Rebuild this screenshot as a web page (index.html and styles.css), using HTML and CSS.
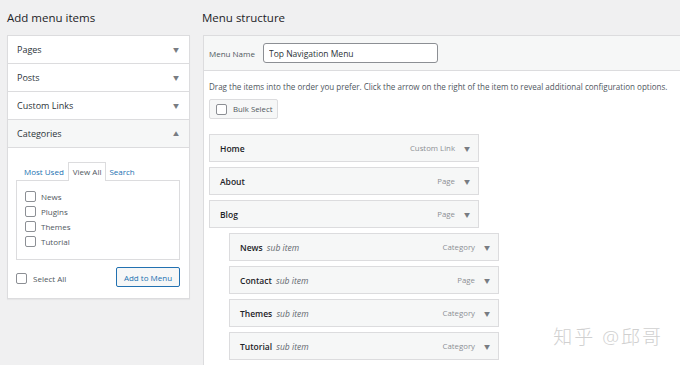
FILE: index.html
```html
<!DOCTYPE html>
<html lang="en">
<head>
    <meta charset="UTF-8">
    <title>Menus</title>
    <link rel="stylesheet" href="styles.css">
</head>
<body>
    <div class="menus-page">
        <div class="col-left">
            <h2 class="col-title">Add menu items</h2>
            <div class="accordion">
                <div class="acc-row"><span>Pages</span><span class="arrow">&#9660;</span></div>
                <div class="acc-row"><span>Posts</span><span class="arrow">&#9660;</span></div>
                <div class="acc-row"><span>Custom Links</span><span class="arrow">&#9660;</span></div>
                <div class="acc-row acc-open"><span>Categories</span><span class="arrow">&#9650;</span></div>
                <div class="acc-body">
                    <div class="tabs">
                        <span class="tab">Most Used</span>
                        <span class="tab tab-active">View All</span>
                        <span class="tab">Search</span>
                    </div>
                    <div class="cat-list">
                        <label class="cat-item"><span class="check"></span>News</label>
                        <label class="cat-item"><span class="check"></span>Plugins</label>
                        <label class="cat-item"><span class="check"></span>Themes</label>
                        <label class="cat-item"><span class="check"></span>Tutorial</label>
                    </div>
                    <div class="acc-actions">
                        <label class="select-all"><span class="check"></span>Select All</label>
                        <button type="button" class="add-btn">Add to Menu</button>
                    </div>
                </div>
            </div>
        </div>

        <div class="col-right">
            <h2 class="col-title">Menu structure</h2>
            <div class="menu-panel">
                <div class="menu-header">
                    <span class="menu-name-label">Menu Name</span>
                    <input class="menu-name" type="text" value="Top Navigation Menu">
                </div>
                <div class="menu-body">
                    <p class="hint">Drag the items into the order you prefer. Click the arrow on the right of the item to reveal additional configuration options.</p>
                    <button type="button" class="bulk-btn"><span class="check"></span>Bulk Select</button>

                    <ul class="menu-items">
                        <li class="menu-item"><span class="item-title">Home</span><span class="item-type">Custom Link</span><span class="arrow">&#9660;</span></li>
                        <li class="menu-item"><span class="item-title">About</span><span class="item-type">Page</span><span class="arrow">&#9660;</span></li>
                        <li class="menu-item"><span class="item-title">Blog</span><span class="item-type">Page</span><span class="arrow">&#9660;</span></li>
                        <li class="menu-item sub"><span class="item-title">News <em>sub item</em></span><span class="item-type">Category</span><span class="arrow">&#9660;</span></li>
                        <li class="menu-item sub"><span class="item-title">Contact <em>sub item</em></span><span class="item-type">Page</span><span class="arrow">&#9660;</span></li>
                        <li class="menu-item sub"><span class="item-title">Themes <em>sub item</em></span><span class="item-type">Category</span><span class="arrow">&#9660;</span></li>
                        <li class="menu-item sub"><span class="item-title">Tutorial <em>sub item</em></span><span class="item-type">Category</span><span class="arrow">&#9660;</span></li>
                    </ul>
                </div>
            </div>
        </div>
    </div>
    <div class="watermark">知乎 @邱哥</div>
</body>
</html>
```

FILE: styles.css
```css
body {
    margin: 0;
    background-color: #f0f0f1;
    font-family: "Open Sans", "Noto Sans CJK SC", sans-serif;
    color: #2c3338;
    height: 365px;
    overflow: hidden;
    position: relative;
}

.menus-page {
    display: grid;
    grid-template-columns: 183px 1fr;
    column-gap: 13px;
    padding-left: 7px;
}

.col-title {
    margin: 0;
    height: 35px;
    line-height: 36px;
    font-size: 11.5px;
    font-weight: 400;
    color: #1d2327;
}

.col-right .col-title {
    margin-left: -1px;
}

/* left accordion */
.accordion {
    background: #fff;
    border: 1px solid #dcdcde;
    box-shadow: 0 1px 1px rgba(0, 0, 0, 0.04);
}

.acc-row {
    display: flex;
    justify-content: space-between;
    align-items: center;
    height: 27px;
    padding: 0 10px 0 9px;
    border-bottom: 1px solid #dcdcde;
    font-size: 9px;
}

.acc-open {
    background: #f6f7f7;
}

.arrow {
    font-size: 6px;
    color: #787c82;
}

.acc-body {
    padding: 14px 9px 11px 8px;
}

.tabs {
    display: flex;
    font-size: 8px;
    padding-left: 5px;
}

.tab {
    padding: 3px 3px 3px 2px;
    color: #2271b1;
    border: 1px solid transparent;
    border-bottom: none;
}

.tab-active {
    color: #50575e;
    border-color: #dcdcde;
    background: #fff;
    margin-bottom: -1px;
    position: relative;
    padding: 3px 4px;
}

.cat-list {
    border: 1px solid #dcdcde;
    height: 68px;
    padding: 10px 0 0 8px;
    display: flex;
    flex-direction: column;
    gap: 4px;
}

.cat-item,
.select-all {
    display: flex;
    align-items: center;
    gap: 5px;
    font-size: 8px;
    color: #50575e;
    height: 11px;
}

.check {
    display: inline-block;
    width: 9px;
    height: 9px;
    border: 1px solid #8c8f94;
    border-radius: 2px;
    background: #fff;
}

.acc-actions {
    display: flex;
    justify-content: space-between;
    align-items: center;
    margin-top: 7px;
}

.select-all {
    gap: 6px;
    margin-top: 3px;
}

.add-btn {
    font-family: inherit;
    font-size: 8px;
    color: #2271b1;
    background: #f6f7f7;
    border: 1px solid #2271b1;
    border-radius: 2px;
    height: 20px;
    width: 64px;
    padding: 0;
}

/* right panel */
.menu-panel {
    background: #fff;
    border-left: 1px solid #dcdcde;
    border-top: 1px solid #dcdcde;
    height: 330px;
}

.menu-header {
    display: flex;
    align-items: center;
    gap: 8px;
    height: 34px;
    padding-left: 5px;
    background: #f6f7f7;
    border-bottom: 1px solid #dcdcde;
}

.menu-name-label {
    font-size: 8px;
    color: #50575e;
}

.menu-name {
    width: 175px;
    height: 20px;
    box-sizing: border-box;
    border: 1px solid #8c8f94;
    border-radius: 3px;
    padding: 0 5px;
    font-family: inherit;
    font-size: 8.5px;
    color: #2c3338;
}

.menu-body {
    padding: 10px 0 0 5px;
}

.hint {
    margin: 0;
    font-size: 8.05px;
    color: #50575e;
    white-space: nowrap;
}

.bulk-btn {
    display: flex;
    align-items: center;
    gap: 6px;
    margin-top: 7px;
    height: 20px;
    padding: 0 5px 0 6px;
    background: #f6f7f7;
    border: 1px solid #dcdcde;
    border-radius: 2px;
    font-family: inherit;
    font-size: 7.8px;
    color: #50575e;
}

.menu-items {
    list-style: none;
    margin: 15px 0 0;
    padding: 0;
    display: flex;
    flex-direction: column;
    gap: 5px;
}

.menu-item {
    display: flex;
    align-items: center;
    width: 270px;
    height: 28px;
    box-sizing: border-box;
    padding: 0 8px 0 10px;
    background: #f6f7f7;
    border: 1px solid #dcdcde;
}

.menu-item.sub {
    margin-left: 20px;
}

.item-title {
    font-size: 8.5px;
    font-weight: 600;
    color: #1d2327;
    flex: 1;
}

.item-title em {
    font-weight: 400;
    color: #646970;
    margin-left: 2px;
}

.item-type {
    font-size: 7.8px;
    color: #8c8f94;
    margin-right: 9px;
}

.watermark {
    position: absolute;
    right: 17px;
    bottom: 15px;
    font-size: 19px;
    font-weight: 300;
    color: #d0d0d0;
    letter-spacing: 2px;
}
```
